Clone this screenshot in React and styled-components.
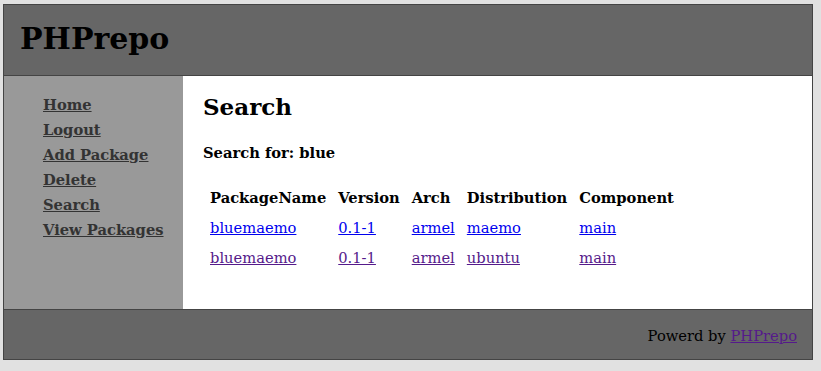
import React from 'react';
import styled, { createGlobalStyle } from 'styled-components';

const Global = createGlobalStyle`
  html, body {
    margin: 0;
    padding: 0;
    background: #e1e1e1;
  }
  body {
    padding: 4px 0 0 3px;
    font-family: "DejaVu Serif", Georgia, serif;
    font-size: 14.7px;
  }
`;

const Frame = styled.div`
  width: 808px;
  border: 1px solid #444;
  background: #fff;
`;

const Header = styled.div`
  height: 70px;
  background: #666;
  border-bottom: 1px solid #444;
  display: flex;
  align-items: center;
  padding-left: 16px;
`;

const Title = styled.h1`
  margin: 0;
  font-size: 30px;
  font-weight: bold;
  color: #000;
  padding-bottom: 4px;
`;

const Middle = styled.div`
  display: flex;
  height: 233px;
`;

const Sidebar = styled.ul`
  width: 179px;
  background: #999;
  margin: 0;
  padding: 16px 0 0 39px;
  box-sizing: border-box;
  list-style: none;
`;

const NavItem = styled.li`
  line-height: 25px;
  a {
    color: #333;
    font-weight: bold;
    text-decoration: underline;
  }
`;

const Content = styled.div`
  flex: 1;
  padding: 16px 20px 0;
`;

const Heading = styled.h2`
  margin: 0;
  font-size: 23px;
  line-height: 30px;
`;

const SearchFor = styled.p`
  margin: 20px 0 0;
  font-weight: bold;
  line-height: 22px;
`;

const Table = styled.table`
  margin-top: 17px;
  border-spacing: 2px;
  th, td {
    text-align: left;
    padding: 3px 5px;
    height: 22px;
  }
  a { color: #0000ee; }
  tr.visited a { color: #551a8b; }
`;

const Footer = styled.div`
  height: 50px;
  background: #666;
  border-top: 1px solid #444;
  display: flex;
  align-items: center;
  justify-content: flex-end;
  padding: 2px 15px 0 0;
  box-sizing: border-box;
  a { color: #551a8b; }
`;

const nav = ['Home', 'Logout', 'Add Package', 'Delete', 'Search', 'View Packages'];

const rows = [
  { name: 'bluemaemo', version: '0.1-1', arch: 'armel', dist: 'maemo', comp: 'main', visited: false },
  { name: 'bluemaemo', version: '0.1-1', arch: 'armel', dist: 'ubuntu', comp: 'main', visited: true },
];

export default function App() {
  return (
    <>
      <Global />
      <Frame>
        <Header>
          <Title>PHPrepo</Title>
        </Header>
        <Middle>
          <Sidebar>
            {nav.map((n) => (
              <NavItem key={n}><a href="#">{n}</a></NavItem>
            ))}
          </Sidebar>
          <Content>
            <Heading>Search</Heading>
            <SearchFor>Search for: blue</SearchFor>
            <Table>
              <thead>
                <tr>
                  <th>PackageName</th>
                  <th>Version</th>
                  <th>Arch</th>
                  <th>Distribution</th>
                  <th>Component</th>
                </tr>
              </thead>
              <tbody>
                {rows.map((r, i) => (
                  <tr key={i} className={r.visited ? 'visited' : ''}>
                    <td><a href="#">{r.name}</a></td>
                    <td><a href="#">{r.version}</a></td>
                    <td><a href="#">{r.arch}</a></td>
                    <td><a href="#">{r.dist}</a></td>
                    <td><a href="#">{r.comp}</a></td>
                  </tr>
                ))}
              </tbody>
            </Table>
          </Content>
        </Middle>
        <Footer>
          Powerd by&nbsp;<a href="#">PHPrepo</a>
        </Footer>
      </Frame>
    </>
  );
}
